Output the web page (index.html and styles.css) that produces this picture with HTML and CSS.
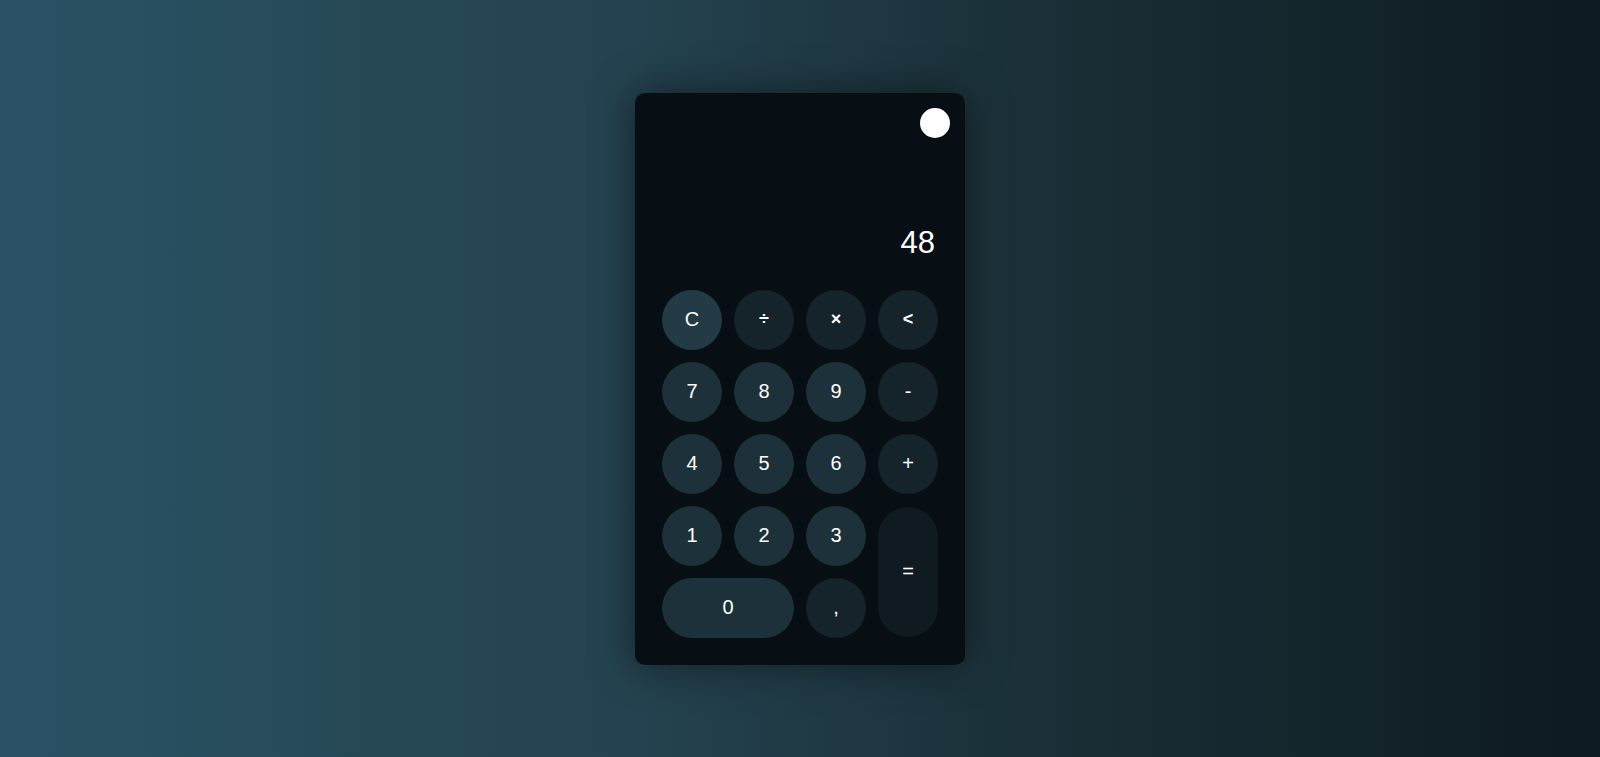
FILE: index.html
```html
<!DOCTYPE html>
<html lang="en">
<head>
<meta charset="utf-8">
<title>Calculator</title>
<link rel="stylesheet" href="styles.css">
</head>
<body>
<div class="calc">
  <div class="top">
    <button class="toggle" aria-label="theme"></button>
  </div>
  <div class="display">48</div>
  <div class="keys">
    <button class="key clear">C</button>
    <button class="key op bold">÷</button>
    <button class="key op bold">×</button>
    <button class="key op bold">&lt;</button>
    <button class="key">7</button>
    <button class="key">8</button>
    <button class="key">9</button>
    <button class="key op">-</button>
    <button class="key">4</button>
    <button class="key">5</button>
    <button class="key">6</button>
    <button class="key op">+</button>
    <button class="key">1</button>
    <button class="key">2</button>
    <button class="key">3</button>
    <button class="key equals">=</button>
    <button class="key zero">0</button>
    <button class="key op">,</button>
  </div>
</div>
</body>
</html>
```
FILE: styles.css
```css
* { box-sizing: border-box; }
html, body { height: 100%; }
body {
  margin: 0;
  background: linear-gradient(to right, #2a5264 0%, #24424f 40%, #1a2f37 65%, #0d1a1f 100%);
  display: flex;
  align-items: center;
  justify-content: center;
  font-family: "Liberation Sans", Arial, sans-serif;
}
.calc {
  width: 330px;
  height: 572px;
  background: #070f14;
  border-radius: 10px;
  padding: 15px 27px 27px;
  display: flex;
  flex-direction: column;
  box-shadow: 0 0 40px rgba(0, 0, 0, 0.5);
}
.top {
  display: flex;
  justify-content: flex-end;
  margin-right: -12px;
  height: 30px;
}
.toggle {
  width: 30px;
  height: 30px;
  border-radius: 50%;
  background: #ffffff;
  border: none;
  padding: 0;
}
.display {
  height: 152px;
  display: flex;
  align-items: flex-end;
  justify-content: flex-end;
  padding: 0 3px 30px 0;
  color: #ffffff;
  font-size: 31px;
  line-height: 34px;
}
.keys {
  display: grid;
  grid-template-columns: repeat(4, 60px);
  grid-auto-rows: 60px;
  gap: 12px;
}
.key {
  border: none;
  border-radius: 30px;
  background: #1c3139;
  color: #ffffff;
  font-family: "Liberation Sans", Arial, sans-serif;
  font-size: 20px;
  line-height: 1;
  padding: 0 0 2px;
  display: flex;
  align-items: center;
  justify-content: center;
}
.key.clear { background: #223b45; }
.key.op { background: #15242a; }
.key.bold { font-weight: bold; font-size: 18px; }
.key.equals {
  background: #0f1b20;
  grid-column: 4;
  grid-row: 4 / span 2;
  height: 130px;
  align-self: center;
}
.key.zero {
  grid-column: 1 / span 2;
}
```
